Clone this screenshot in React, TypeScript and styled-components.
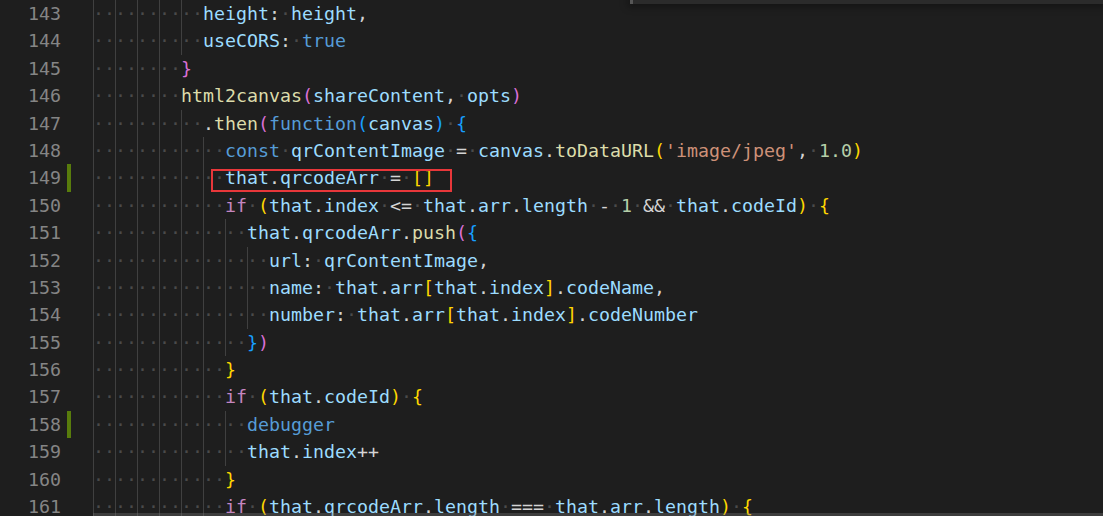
import React from "react";
import styled, { createGlobalStyle } from "styled-components";

const GlobalStyle = createGlobalStyle`
  html, body {
    margin: 0;
    padding: 0;
    background: #1e1e1e;
    overflow: hidden;
  }
`;

const colors: Record<string, string> = {
  v: "#9cdcfe",
  f: "#dcdcaa",
  k: "#569cd6",
  c: "#c586c0",
  s: "#ce9178",
  n: "#b5cea8",
  o: "#d4d4d4",
  b1: "#ffd700",
  b2: "#da70d6",
  b3: "#179fff",
};

const Editor = styled.div`
  position: relative;
  width: 1103px;
  height: 516px;
  overflow: hidden;
  background: #1e1e1e;
  font-family: "DejaVu Sans Mono", monospace;
  font-size: 18.27px;
`;

const Lines = styled.div`
  display: flex;
  flex-direction: column;
`;

const Row = styled.div`
  display: flex;
  flex: none;
  height: 27.4px;
  line-height: 27.4px;
  white-space: pre;
`;

const LineNo = styled.div`
  flex: none;
  width: 61px;
  text-align: right;
  color: #858585;
`;

const Marker = styled.div<{ $dirty?: boolean }>`
  flex: none;
  width: 4px;
  margin-left: 6px;
  margin-right: 22px;
  background: ${(p) => (p.$dirty ? "#587c0c" : "transparent")};
`;

const Code = styled.div`
  display: flex;
  align-items: stretch;
`;

const IndentUnit = styled.span`
  display: flex;
  width: 22px;
  box-shadow: inset 1px 0 0 #404040;
`;

const Dot = styled.span`
  display: inline-block;
  width: 11px;
  text-align: center;
  color: #4a4a4a;
`;

const Tok = styled.span<{ $c: string }>`
  color: ${(p) => p.$c};
`;

const Highlight = styled.span`
  position: relative;
  display: inline-block;
  &::before {
    content: "";
    position: absolute;
    left: -14px;
    right: -18px;
    top: 4.6px;
    bottom: -0.4px;
    border: 2px solid #e8373a;
    pointer-events: none;
  }
`;

const FindWidget = styled.div`
  position: absolute;
  top: 0;
  left: 630px;
  right: 0;
  height: 4px;
  background: #2b2b2b;
  border-left: 3px solid #565656;
  box-shadow: 0 0 8px 2px rgba(0, 0, 0, 0.45);
`;

const HScroll = styled.div`
  position: absolute;
  left: 93px;
  right: 0;
  bottom: 0;
  height: 3px;
  background: rgba(121, 121, 121, 0.35);
`;

type Line = { n: number; indent: number; src: string; dirty?: boolean; box?: boolean };

const lines: Line[] = [
  { n: 143, indent: 10, src: "v:height o:: w v:height o:," },
  { n: 144, indent: 10, src: "v:useCORS o:: w k:true" },
  { n: 145, indent: 8, src: "b2:}" },
  { n: 146, indent: 8, src: "f:html2canvas b2:( v:shareContent o:, w v:opts b2:)" },
  { n: 147, indent: 10, src: "o:. f:then b2:( k:function b3:( v:canvas b3:) w b3:{" },
  {
    n: 148,
    indent: 12,
    src: "k:const w v:qrContentImage w o:= w v:canvas o:. f:toDataURL b1:( s:'image/jpeg' o:, w n:1.0 b1:)",
  },
  { n: 149, indent: 12, src: "v:that o:. v:qrcodeArr w o:= w b1:[ b1:]", dirty: true, box: true },
  {
    n: 150,
    indent: 12,
    src: "c:if w b1:( v:that o:. v:index w o:<= w v:that o:. v:arr o:. v:length w o:- w n:1 w o:&& w v:that o:. v:codeId b1:) w b1:{",
  },
  { n: 151, indent: 14, src: "v:that o:. v:qrcodeArr o:. f:push b2:( b3:{" },
  { n: 152, indent: 16, src: "v:url o:: w v:qrContentImage o:," },
  { n: 153, indent: 16, src: "v:name o:: w v:that o:. v:arr b1:[ v:that o:. v:index b1:] o:. v:codeName o:," },
  { n: 154, indent: 16, src: "v:number o:: w v:that o:. v:arr b1:[ v:that o:. v:index b1:] o:. v:codeNumber" },
  { n: 155, indent: 14, src: "b3:} b2:)" },
  { n: 156, indent: 12, src: "b1:}" },
  { n: 157, indent: 12, src: "c:if w b1:( v:that o:. v:codeId b1:) w b1:{" },
  { n: 158, indent: 14, src: "k:debugger", dirty: true },
  { n: 159, indent: 14, src: "v:that o:. v:index o:++" },
  { n: 160, indent: 12, src: "b1:}" },
  {
    n: 161,
    indent: 12,
    src: "c:if w b1:( v:that o:. v:qrcodeArr o:. v:length w o:=== w v:that o:. v:arr o:. v:length b1:) w b1:{",
  },
];

function renderTokens(src: string) {
  return src.split(" ").map((t, i) => {
    if (t === "w") return <Dot key={i}>·</Dot>;
    const idx = t.indexOf(":");
    const type = t.slice(0, idx);
    const text = t.slice(idx + 1);
    return (
      <Tok key={i} $c={colors[type]}>
        {text}
      </Tok>
    );
  });
}

function CodeLine({ line }: { line: Line }) {
  const units = Array.from({ length: line.indent / 2 });
  const toks = renderTokens(line.src);
  return (
    <Row>
      <LineNo>{line.n}</LineNo>
      <Marker $dirty={line.dirty} />
      <Code>
        {units.map((_, i) => (
          <IndentUnit key={i}>
            <Dot>·</Dot>
            <Dot>·</Dot>
          </IndentUnit>
        ))}
        {line.box ? <Highlight>{toks}</Highlight> : toks}
      </Code>
    </Row>
  );
}

export default function App() {
  return (
    <>
      <GlobalStyle />
      <Editor>
        <Lines>
          {lines.map((l) => (
            <CodeLine key={l.n} line={l} />
          ))}
        </Lines>
        <FindWidget />
        <HScroll />
      </Editor>
    </>
  );
}
